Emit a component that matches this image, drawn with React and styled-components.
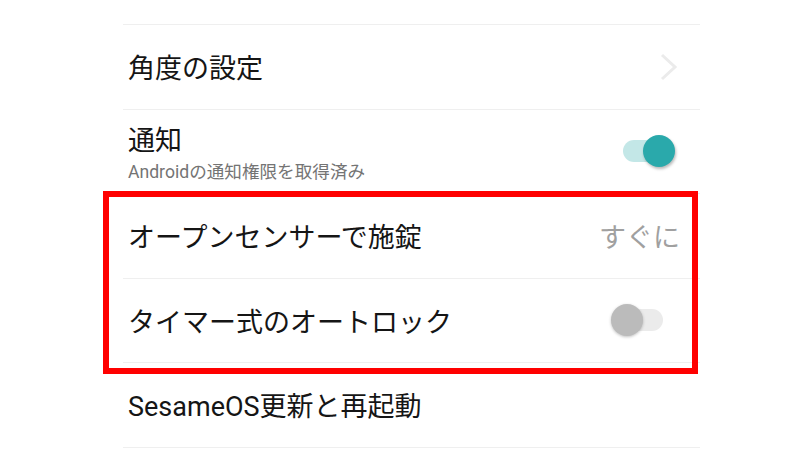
import React from "react";
import styled, { createGlobalStyle } from "styled-components";

const Global = createGlobalStyle`
  html, body { margin: 0; padding: 0; background: #ffffff; }
  body { width: 800px; height: 450px; overflow: hidden; font-family: Roboto, "Noto Sans CJK JP", sans-serif; }
`;

const Page = styled.div`
  position: relative;
  width: 800px;
  height: 450px;
  background: #fff;
`;

const List = styled.div`
  margin-left: 123px;
  width: 577px;
  display: flex;
  flex-direction: column;
`;

const TopSpacer = styled.div`
  height: 24px;
  border-bottom: 1px solid #efefef;
`;

const Row = styled.div`
  height: 83.5px;
  border-bottom: 1px solid #efefef;
  display: flex;
  align-items: center;
  justify-content: space-between;
  padding: 0 0 0 5px;
  padding-right: ${(p) => p.$pr || 0}px;
`;

const TextCol = styled.div`
  display: flex;
  flex-direction: column;
  gap: 4px;
  padding-top: 5px;
`;

const Title = styled.div`
  font-size: 27px;
  line-height: 32px;
  color: #151515;
  white-space: nowrap;
  margin-top: ${(p) => (p.$inCol ? 0 : 5)}px;
`;

const Sub = styled.div`
  font-size: 17.6px;
  line-height: 22px;
  color: #747474;
  white-space: nowrap;
`;

const Value = styled.div`
  font-size: 27px;
  line-height: 32px;
  color: #a0a0a0;
  white-space: nowrap;
  margin-top: 5px;
`;

const Chevron = styled.svg`
  width: 20px;
  height: 28px;
  display: block;
`;

const Track = styled.div`
  position: relative;
  width: 48px;
  height: 22px;
  border-radius: 11px;
  background: ${(p) => (p.$on ? "#c3e7e7" : "#ebebeb")};
`;

const Thumb = styled.div`
  position: absolute;
  top: -5px;
  ${(p) => (p.$on ? "right: -4px;" : "left: -4px;")}
  width: 32px;
  height: 32px;
  border-radius: 50%;
  background: ${(p) => (p.$on ? "#2aa9ab" : "#bbbbbb")};
  box-shadow: ${(p) =>
    p.$on ? "1px 2px 3px rgba(0,0,0,0.28)" : "0 1px 3px rgba(0,0,0,0.25)"};
`;

const Highlight = styled.div`
  position: absolute;
  left: 103px;
  top: 191px;
  width: 595px;
  height: 183px;
  box-sizing: border-box;
  border: 6px solid #ff0000;
  pointer-events: none;
`;

function Switch({ on }) {
  return (
    <Track $on={on}>
      <Thumb $on={on} />
    </Track>
  );
}

export default function App() {
  return (
    <Page>
      <Global />
      <List>
        <TopSpacer />
        <Row $pr={21}>
          <Title>角度の設定</Title>
          <Chevron viewBox="0 0 20 28">
            <path d="M3 2 L16 14 L3 26" fill="none" stroke="#ebebeb" strokeWidth="3" />
          </Chevron>
        </Row>
        <Row $pr={29}>
          <TextCol>
            <Title $inCol>通知</Title>
            <Sub>Androidの通知権限を取得済み</Sub>
          </TextCol>
          <Switch on />
        </Row>
        <Row $pr={20}>
          <Title>オープンセンサーで施錠</Title>
          <Value>すぐに</Value>
        </Row>
        <Row $pr={37}>
          <Title>タイマー式のオートロック</Title>
          <Switch on={false} />
        </Row>
        <Row>
          <Title>SesameOS更新と再起動</Title>
        </Row>
      </List>
      <Highlight />
    </Page>
  );
}
